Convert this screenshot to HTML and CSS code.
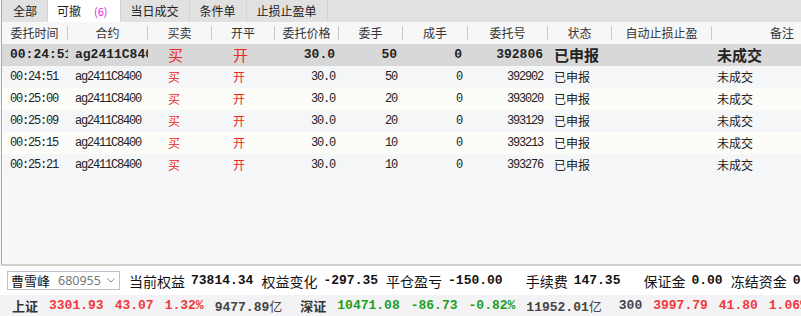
FILE: index.html
```html
<!DOCTYPE html>
<html lang="zh">
<head>
  <meta charset="UTF-8" />
  <title>委托单</title>
  <link rel="stylesheet" href="styles.css">
</head>
<body>
  <div class="orders">
    <div class="tabs">
      <div class="tab first">全部</div>
      <div class="tab active">可撤<span class="cnt">(6)</span></div>
      <div class="tab">当日成交</div>
      <div class="tab">条件单</div>
      <div class="tab">止损止盈单</div>
    </div>

    <div class="grid head">
      <div>委托时间</div>
      <div>合约</div>
      <div>买卖</div>
      <div>开平</div>
      <div>委托价格</div>
      <div>委手</div>
      <div>成手</div>
      <div>委托号</div>
      <div>状态</div>
      <div>自动止损止盈</div>
      <div>备注</div>
    </div>

    <div class="grid row sel">
      <div class="num">00:24:51</div>
      <div class="num">ag2411C8400</div>
      <div class="red">买</div>
      <div class="red">开</div>
      <div class="num">30.0</div>
      <div class="num">50</div>
      <div class="num">0</div>
      <div class="num">392806</div>
      <div>已申报</div>
      <div></div>
      <div>未成交</div>
    </div>
    <div class="grid row even">
      <div class="num">00:24:51</div>
      <div class="num">ag2411C8400</div>
      <div class="red">买</div>
      <div class="red">开</div>
      <div class="num">30.0</div>
      <div class="num">50</div>
      <div class="num">0</div>
      <div class="num">392902</div>
      <div>已申报</div>
      <div></div>
      <div>未成交</div>
    </div>
    <div class="grid row odd">
      <div class="num">00:25:00</div>
      <div class="num">ag2411C8400</div>
      <div class="red">买</div>
      <div class="red">开</div>
      <div class="num">30.0</div>
      <div class="num">20</div>
      <div class="num">0</div>
      <div class="num">393020</div>
      <div>已申报</div>
      <div></div>
      <div>未成交</div>
    </div>
    <div class="grid row even">
      <div class="num">00:25:09</div>
      <div class="num">ag2411C8400</div>
      <div class="red">买</div>
      <div class="red">开</div>
      <div class="num">30.0</div>
      <div class="num">20</div>
      <div class="num">0</div>
      <div class="num">393129</div>
      <div>已申报</div>
      <div></div>
      <div>未成交</div>
    </div>
    <div class="grid row odd">
      <div class="num">00:25:15</div>
      <div class="num">ag2411C8400</div>
      <div class="red">买</div>
      <div class="red">开</div>
      <div class="num">30.0</div>
      <div class="num">10</div>
      <div class="num">0</div>
      <div class="num">393213</div>
      <div>已申报</div>
      <div></div>
      <div>未成交</div>
    </div>
    <div class="grid row even">
      <div class="num">00:25:21</div>
      <div class="num">ag2411C8400</div>
      <div class="red">买</div>
      <div class="red">开</div>
      <div class="num">30.0</div>
      <div class="num">10</div>
      <div class="num">0</div>
      <div class="num">393276</div>
      <div>已申报</div>
      <div></div>
      <div>未成交</div>
    </div>
  </div>

  <div class="acct">
    <div class="account">
      <span class="who">曹雪峰</span>
      <span class="id">680955</span>
      <svg class="chev" width="8" height="5" viewBox="0 0 8 5"><path d="M0.5 0.5 L4 4 L7.5 0.5" fill="none" stroke="#888" stroke-width="1"/></svg>
    </div>
    <span class="lbl first">当前权益</span><span class="val">73814.34</span>
    <span class="lbl">权益变化</span><span class="val">-297.35</span>
    <span class="lbl">平仓盈亏</span><span class="val">-150.00</span>
    <span class="lbl wide">手续费</span><span class="val">147.35</span>
    <span class="lbl wide">保证金</span><span class="val">0.00</span>
    <span class="lbl">冻结资金</span><span class="val">0.00</span>
  </div>

  <div class="ticker">
    <span class="name">上证</span>
    <span class="up">3301.93</span>
    <span class="up">43.07</span>
    <span class="up">1.32%</span>
    <span class="amt">9477.89<span class="cjk">亿</span></span>
    <span class="name grp">深证</span>
    <span class="down">10471.08</span>
    <span class="down">-86.73</span>
    <span class="down">-0.82%</span>
    <span class="amt">11952.01<span class="cjk">亿</span></span>
    <span class="amt idx">300</span>
    <span class="up">3997.79</span>
    <span class="up">41.80</span>
    <span class="up">1.06%</span>
  </div>
</body>
</html>
```

FILE: styles.css
```css
body {
  margin: 0;
  width: 801px;
  height: 316px;
  overflow: hidden;
  background: #f8f8f8;
  font-family: "Noto Sans CJK SC", "Noto Sans", sans-serif;
  color: #222;
}

/* order panel */
.orders {
  height: 264px;
  margin-left: 1px;
  border-left: 1px solid #a9a9a9;
  border-bottom: 2px solid #d0d0d0;
  background: #f8f8f8;
}
.tabs {
  display: flex;
  height: 22px;
  background: #e1e1e1;
}
.tab {
  padding: 0 10px;
  line-height: 21px;
  font-size: 12px;
  border-right: 1px solid #cfd2d8;
}
.tab.first {
  padding-left: 11px;
}
.tab.active {
  background: #fff;
  padding-left: 9px;
  padding-right: 12px;
}
.cnt {
  color: #e020e0;
  font-size: 11px;
  margin-left: 13px;
}

.grid {
  display: grid;
  grid-template-columns: 66px 80px 64px 63px 64px 64px 65px 80px 64px 100px 1fr;
}
.head {
  height: 22px;
  align-items: center;
  background: #f7f7f7;
  font-size: 12px;
  color: #333;
}
.head > div {
  text-align: center;
  line-height: 14px;
  border-right: 1px solid #cacaca;
}
.head > div:last-child {
  border-right: none;
  text-align: right;
  padding-right: 7px;
}

.row {
  height: 22px;
  line-height: 22px;
  font-size: 12px;
}
.row > div {
  overflow: hidden;
  white-space: nowrap;
}
.row > :nth-child(1) { padding-left: 8px; }
.row > :nth-child(2) { padding-left: 7px; }
.row > :nth-child(3) { padding-left: 20px; }
.row > :nth-child(4) { padding-left: 21px; }
.row > :nth-child(5) { text-align: right; padding-right: 4px; }
.row > :nth-child(6),
.row > :nth-child(7) { text-align: right; padding-right: 6px; }
.row > :nth-child(8) { text-align: right; padding-right: 5px; }
.row > :nth-child(9) { padding-left: 6px; }
.row > :nth-child(11) { padding-left: 5px; }

.even { background: #f5f6f8; }
.odd { background: #fcfcf8; }
.sel {
  background: #d8d8d8;
  font-size: 15px;
  font-weight: bold;
}

.num {
  font-family: "Liberation Mono", monospace;
  font-size: 12px;
  letter-spacing: -1.2px;
}
.sel .num {
  font-size: 13px;
  letter-spacing: 0;
}
.red {
  color: #ee2626;
}
.sel .red {
  font-weight: normal;
}

/* account bar */
.acct {
  height: 29px;
  display: flex;
  align-items: center;
  background: #fff;
  font-size: 14px;
  color: #111;
  white-space: nowrap;
  overflow: hidden;
}
.account {
  flex: none;
  display: flex;
  align-items: center;
  box-sizing: border-box;
  width: 113px;
  height: 19px;
  margin-left: 7px;
  padding-left: 3px;
  border: 1px solid #b9c0cb;
  font-size: 13px;
}
.account .id {
  margin-left: 8px;
  color: #777;
  font-family: "Noto Sans", sans-serif;
  font-size: 12.5px;
}
.chev {
  margin-left: auto;
  margin-right: 4px;
}
.lbl {
  margin-left: 8px;
}
.lbl.first {
  margin-left: 9px;
}
.lbl.wide {
  margin-left: 23px;
}
.val {
  margin-left: 6px;
  font-family: "Liberation Mono", monospace;
  font-weight: bold;
  font-size: 13px;
}

/* index ticker */
.ticker {
  height: 21px;
  display: flex;
  align-items: center;
  gap: 11px;
  padding-left: 12px;
  background: #f3f3f5;
  font-family: "Liberation Mono", monospace;
  font-weight: bold;
  font-size: 13px;
  white-space: nowrap;
  overflow: hidden;
}
.name {
  font-family: "Noto Sans CJK SC", sans-serif;
  color: #333;
}
.grp {
  margin-left: 7px;
}
.up { color: #f03a3a; }
.down { color: #1e9e1e; }
.amt { color: #444; }
.cjk {
  font-family: "Noto Sans CJK SC", sans-serif;
  font-weight: normal;
}
.idx {
  margin-left: 6px;
}
```
